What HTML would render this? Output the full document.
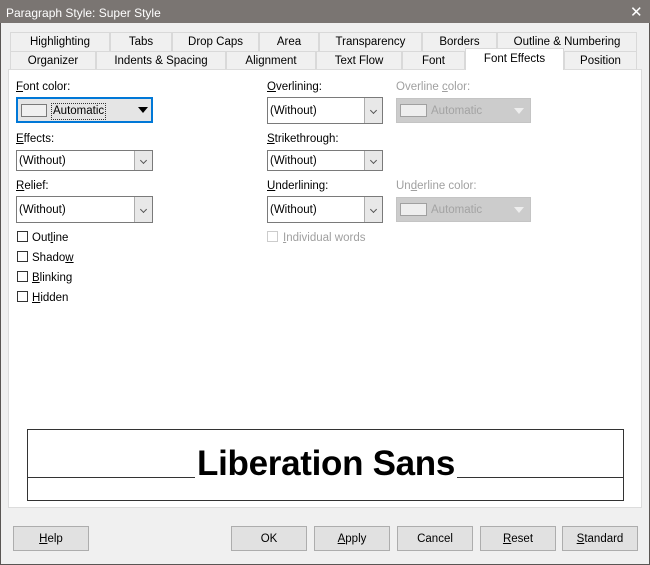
<!DOCTYPE html>
<html><head><style>
*{margin:0;padding:0;box-sizing:border-box}
body{width:650px;height:565px;overflow:hidden;font-family:"Liberation Sans",sans-serif;font-size:11.5px;color:#000;background:#f0f0f0;position:relative}
.a{position:absolute}
#win{left:0;top:0;width:650px;height:565px;border:1px solid #5a5654}
#title{left:0;top:0;width:650px;height:23px;background:#7a7572;color:#fff;font-size:12px;padding:6px 0 0 6px}
.tab{position:absolute;height:19px;border:1px solid #d9d9d9;border-bottom:none;background:#f0f0f0;text-align:center;line-height:19px}
#panel{left:8px;top:69px;width:634px;height:439px;background:#fff;border:1px solid #dcdcdc}
.lbl{position:absolute;white-space:nowrap;margin-top:2px}
.sel{position:absolute;background:#fff;border:1px solid #7a7a7a;padding-left:2px;white-space:nowrap}
.sel .btn{position:absolute;right:0;top:0;bottom:0;width:18px;background:#e8e8e8;border-left:1px solid #adadad}
.sel .btn:after{content:"";position:absolute;left:6px;top:50%;margin-top:-3px;width:4px;height:4px;border-right:1px solid #555;border-bottom:1px solid #555;transform:rotate(45deg)}
.dis{color:#a0a0a0}
.cb{position:absolute;width:11px;height:11px;border:1px solid #333;background:#fff}
.b{position:absolute;top:526px;height:25px;width:76px;background:#e1e1e1;border:1px solid #adadad;text-align:center;line-height:25px}
u{text-decoration:underline}
</style></head><body>
<div class="a" id="win"></div>
<div class="a" id="title">Paragraph Style: Super Style</div>
<div class="a" style="left:630px;top:3px;color:#fff;font-size:15px">✕</div>

<div class="tab" style="left:10px;top:32px;width:100px">Highlighting</div>
<div class="tab" style="left:110px;top:32px;width:62px">Tabs</div>
<div class="tab" style="left:172px;top:32px;width:87px">Drop Caps</div>
<div class="tab" style="left:259px;top:32px;width:60px">Area</div>
<div class="tab" style="left:319px;top:32px;width:103px">Transparency</div>
<div class="tab" style="left:422px;top:32px;width:75px">Borders</div>
<div class="tab" style="left:497px;top:32px;width:140px">Outline &amp; Numbering</div>

<div class="tab" style="left:10px;top:51px;width:86px">Organizer</div>
<div class="tab" style="left:96px;top:51px;width:130px">Indents &amp; Spacing</div>
<div class="tab" style="left:226px;top:51px;width:90px">Alignment</div>
<div class="tab" style="left:316px;top:51px;width:86px">Text Flow</div>
<div class="tab" style="left:402px;top:51px;width:63px">Font</div>
<div class="tab" style="left:564px;top:51px;width:73px">Position</div>

<div class="a" id="panel"></div>
<div class="tab" style="left:465px;top:48px;width:99px;height:22px;background:#fff;z-index:2;line-height:21px">Font Effects</div>

<div class="lbl" style="left:16px;top:79px"><u>F</u>ont color:</div>
<div class="a" style="left:16px;top:97px;width:137px;height:26px;border:2px solid #0078d7;background:#e5e5e5">
 <div class="a" style="left:3px;top:5px;width:26px;height:13px;border:1px solid #7a7a7a;background:#f0f0f0"></div>
 <div class="a" style="left:33px;top:4px;border:1px dotted #333;padding:0 1px;line-height:15px">Automatic</div>
 <div class="a" style="left:120px;top:8px;width:0;height:0;border-left:5px solid transparent;border-right:5px solid transparent;border-top:6px solid #000"></div>
</div>
<div class="lbl" style="left:16px;top:131px"><u>E</u>ffects:</div>
<div class="sel" style="left:16px;top:150px;width:137px;height:21px;line-height:21px">(Without)<div class="btn"></div></div>
<div class="lbl" style="left:16px;top:178px"><u>R</u>elief:</div>
<div class="sel" style="left:16px;top:196px;width:137px;height:27px;line-height:27px">(Without)<div class="btn"></div></div>

<div class="cb" style="left:17px;top:231px"></div><div class="lbl" style="left:32px;top:230px">Out<u>l</u>ine</div>
<div class="cb" style="left:17px;top:251px"></div><div class="lbl" style="left:32px;top:250px">Shado<u>w</u></div>
<div class="cb" style="left:17px;top:271px"></div><div class="lbl" style="left:32px;top:270px"><u>B</u>linking</div>
<div class="cb" style="left:17px;top:291px"></div><div class="lbl" style="left:32px;top:290px"><u>H</u>idden</div>

<div class="lbl" style="left:267px;top:79px"><u>O</u>verlining:</div>
<div class="sel" style="left:267px;top:97px;width:116px;height:27px;line-height:27px">(Without)<div class="btn"></div></div>
<div class="lbl" style="left:267px;top:131px"><u>S</u>trikethrough:</div>
<div class="sel" style="left:267px;top:150px;width:116px;height:21px;line-height:21px">(Without)<div class="btn"></div></div>
<div class="lbl" style="left:267px;top:178px"><u>U</u>nderlining:</div>
<div class="sel" style="left:267px;top:196px;width:116px;height:27px;line-height:27px">(Without)<div class="btn"></div></div>
<div class="cb" style="left:267px;top:231px;border-color:#ccc"></div><div class="lbl dis" style="left:283px;top:230px"><u>I</u>ndividual words</div>

<div class="lbl dis" style="left:396px;top:79px">Overline <u>c</u>olor:</div>
<div class="a" style="left:396px;top:98px;width:135px;height:25px;background:#ccc;border:1px solid #c4c4c4">
 <div class="a" style="left:3px;top:5px;width:27px;height:13px;border:1px solid #a0a0a0;background:#eee"></div>
 <div class="a dis" style="left:34px;top:6px;color:#a3a3a3">Automatic</div>
 <div class="a" style="left:117px;top:9px;border-left:5px solid transparent;border-right:5px solid transparent;border-top:6px solid #eee"></div>
</div>
<div class="lbl dis" style="left:396px;top:178px">Un<u>d</u>erline color:</div>
<div class="a" style="left:396px;top:197px;width:135px;height:25px;background:#ccc;border:1px solid #c4c4c4">
 <div class="a" style="left:3px;top:5px;width:27px;height:13px;border:1px solid #a0a0a0;background:#eee"></div>
 <div class="a dis" style="left:34px;top:6px;color:#a3a3a3">Automatic</div>
 <div class="a" style="left:117px;top:9px;border-left:5px solid transparent;border-right:5px solid transparent;border-top:6px solid #eee"></div>
</div>

<div class="a" style="left:27px;top:429px;width:597px;height:72px;border:1px solid #333;background:#fff">
 <div class="a" style="left:0;top:47px;width:595px;height:1px;background:#333"></div>
 <div class="a" style="left:167px;top:14px;font-size:35px;font-weight:bold;background:#fff;padding:0 2px;line-height:40px;height:34px;letter-spacing:-0.3px">Liberation Sans</div>
</div>

<div class="b" style="left:13px"><u>H</u>elp</div>
<div class="b" style="left:231px">OK</div>
<div class="b" style="left:314px"><u>A</u>pply</div>
<div class="b" style="left:397px">Cancel</div>
<div class="b" style="left:480px"><u>R</u>eset</div>
<div class="b" style="left:562px"><u>S</u>tandard</div>
</body></html>
